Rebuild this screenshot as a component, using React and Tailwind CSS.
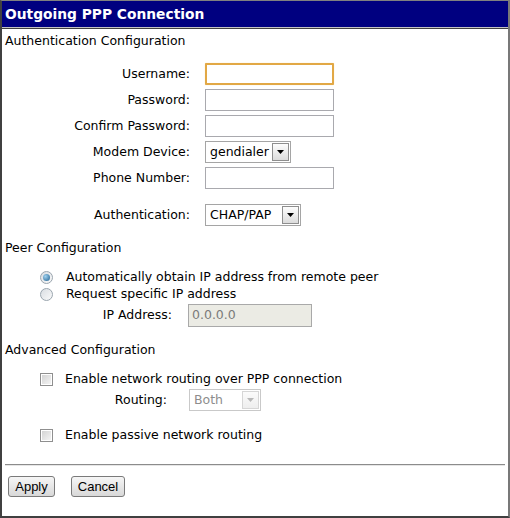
import React from 'react';

const Field = ({ label, children }) => (
    <div className="flex items-center h-[26px]">
        <div className="w-[188px] text-right">{label}</div>
        <div className="ml-[15px] flex items-center">{children}</div>
    </div>
);

const TextBox = ({ focused }) => (
    <div
        className={
            focused
                ? "w-[129px] h-[22px] bg-white border-2 border-[#e2a845] rounded-[1px] shadow-[0_0_1px_#f3d08f]"
                : "w-[129px] h-[22px] bg-white border border-[#a9a9ae]"
        }
    />
);

const Arrow = ({ disabled }) => (
    <svg width="7" height="4" viewBox="0 0 7 4">
        <path d="M0 0h7L3.5 4z" fill={disabled ? "#b8b8b8" : "#000"} />
    </svg>
);

const Select = ({ value, width, disabled }) => (
    <div
        className={
            "h-[22px] flex items-center justify-between gap-[3px] bg-white border pl-[4px] pr-[1px] " +
            (disabled ? "border-[#c9c9c9] text-[#8d8d8d]" : "border-[#a5a5a5] text-black")
        }
        style={{ width }}
    >
        <span className="whitespace-nowrap">{value}</span>
        <div
            className={
                "w-[17px] h-[18px] shrink-0 flex items-center justify-center border bg-gradient-to-b " +
                (disabled
                    ? "border-[#d6d6d6] from-[#fbfbfb] to-[#eeeeee]"
                    : "border-[#8e8e8e] from-[#fdfdfd] to-[#dcdcdc]")
            }
        >
            <Arrow disabled={disabled} />
        </div>
    </div>
);

const Radio = ({ checked }) => (
    <div className="w-[13px] h-[13px] rounded-full border border-[#9aa5ae] bg-gradient-to-br from-[#d9dde2] to-[#fafafa] flex items-center justify-center">
        {checked && (
            <div className="w-[7px] h-[7px] rounded-full bg-[radial-gradient(circle_at_35%_35%,#9fd1ef,#1f5f8f)]" />
        )}
    </div>
);

const Check = () => (
    <div className="w-[13px] h-[13px] border border-[#8f8f8f] bg-white p-[1px]">
        <div className="w-full h-full bg-gradient-to-br from-[#d4d4d4] to-[#f4f4f4]" />
    </div>
);

const Button = ({ children, className }) => (
    <button
        className={
            "h-[21px] border border-[#7a7a7a] rounded-[3px] bg-gradient-to-b from-[#f6f6f6] to-[#d8d8d8] font-['Liberation_Sans',Arial,sans-serif] text-[13px] leading-none text-black " +
            className
        }
    >
        {children}
    </button>
);

export default function App() {
    return (
        <div className="w-[510px] h-[518px] bg-white border-t border-t-[#808080] border-l-2 border-l-[#404040] border-r-2 border-r-[#787878] border-b-2 border-b-[#404040] flex flex-col font-['DejaVu_Sans',Verdana,sans-serif] text-[12.5px] text-black">
            <div className="h-[26px] bg-[#000080] border-b border-b-[#c4c4c4] flex items-center pl-[3px] box-content">
                <span className="text-white font-bold text-[13.8px]">Outgoing PPP Connection</span>
            </div>
            <div className="h-px bg-[#404040]" />

            <div className="pl-[3px] pt-[4px] leading-[16px]">Authentication Configuration</div>

            <div className="mt-[12px]">
                <Field label="Username:"><TextBox focused /></Field>
                <Field label="Password:"><TextBox /></Field>
                <Field label="Confirm Password:"><TextBox /></Field>
                <Field label="Modem Device:"><Select value="gendialer" width={86} /></Field>
                <Field label="Phone Number:"><TextBox /></Field>
                <div className="h-[11px]" />
                <Field label="Authentication:"><Select value="CHAP/PAP" width={96} /></Field>
            </div>

            <div className="pl-[3px] mt-[12px] leading-[16px]">Peer Configuration</div>

            <div className="mt-[13px] pl-[38px]">
                <div className="flex items-center h-[17px] gap-[13px]">
                    <Radio checked />
                    <span>Automatically obtain IP address from remote peer</span>
                </div>
                <div className="flex items-center h-[17px] gap-[13px]">
                    <Radio />
                    <span>Request specific IP address</span>
                </div>
            </div>
            <div className="flex items-center h-[24px]">
                <div className="w-[170px] text-right">IP Address:</div>
                <div className="ml-[16px] w-[124px] h-[23px] bg-[#ebebe4] border border-[#a9a9a9] text-[#7a7a7a] flex items-center pl-[3px]">
                    0.0.0.0
                </div>
            </div>

            <div className="pl-[3px] mt-[15px] leading-[16px]">Advanced Configuration</div>

            <div className="mt-[13px] pl-[38px] flex items-center h-[17px] gap-[12px]">
                <Check />
                <span>Enable network routing over PPP connection</span>
            </div>
            <div className="flex items-center h-[24px]">
                <div className="w-[165px] text-right">Routing:</div>
                <div className="ml-[22px]">
                    <Select value="Both" width={72} disabled />
                </div>
            </div>
            <div className="mt-[15px] pl-[38px] flex items-center h-[17px] gap-[12px]">
                <Check />
                <span>Enable passive network routing</span>
            </div>

            <div className="mt-[20px] mx-[3px] h-[2px] border-t border-t-[#8c8c8c] border-b border-b-[#e6e6e6]" />

            <div className="flex items-center pl-[6px] mt-[10px] gap-[16px]">
                <Button className="w-[47px]">Apply</Button>
                <Button className="w-[54px]">Cancel</Button>
            </div>
        </div>
    );
}
